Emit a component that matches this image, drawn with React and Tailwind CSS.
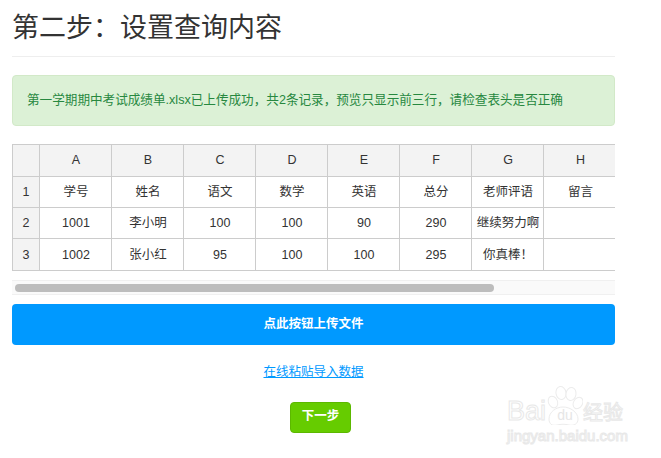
const font = { fontFamily: '"Liberation Sans", "Noto Sans CJK SC", sans-serif' }

const columns = ['A', 'B', 'C', 'D', 'E', 'F', 'G', 'H']
const rows = [
  ['学号', '姓名', '语文', '数学', '英语', '总分', '老师评语', '留言'],
  ['1001', '李小明', '100', '100', '90', '290', '继续努力啊', ''],
  ['1002', '张小红', '95', '100', '100', '295', '你真棒\uFF01', ''],
]

const title = '第二步\uFF1A设置查询内容'
const notice = '第一学期期中考试成绩单.xlsx已上传成功\uFF0C共2条记录\uFF0C预览只显示前三行\uFF0C请检查表头是否正确'

function Watermark() {
  return (
    <div className="absolute right-[34px] bottom-[14px] w-[120px] flex flex-col select-none whitespace-nowrap">
      <div className="flex items-end h-[39px]">
        <span className="w-[40px] text-[27px] leading-[27px] text-white [-webkit-text-stroke:1px_#e8e8e8]">Bai</span>
        <div className="relative w-[36px] h-[39px] shrink-0 flex items-end justify-center pb-[2px]">
          <svg className="absolute inset-0" width="36" height="39" viewBox="40 0 36 39" fill="#fff" stroke="#ececec" strokeWidth="1">
            <ellipse cx="46" cy="16" rx="4.5" ry="6" transform="rotate(-25 46 16)" />
            <ellipse cx="54" cy="7" rx="5" ry="6.5" transform="rotate(-10 54 7)" />
            <ellipse cx="64" cy="8" rx="5" ry="6.5" transform="rotate(10 64 8)" />
            <ellipse cx="71" cy="17" rx="4.5" ry="6" transform="rotate(30 71 17)" />
            <path d="M42 33c0-7 7-12 14-12s15 5 15 12c0 5-4 7-9 6-4-1-8-1-12 0-5 1-8-1-8-6z" />
          </svg>
          <span className="relative text-[14px] leading-[16px] text-[#e6e6e6]">du</span>
        </div>
        <span className="text-[20px] leading-[24px] text-white [-webkit-text-stroke:1px_#e8e8e8]">经验</span>
      </div>
      <span className="mt-[3px] text-[15px] leading-[16px] text-white [-webkit-text-stroke:1px_#e8e8e8]">jingyan.baidu.com</span>
    </div>
  )
}

function App() {
  return (
    <div style={font} className="relative w-[661px] h-[458px] overflow-hidden bg-white px-3 text-[#333]">
      <div className="w-[603px]">
        <h1 className="pt-[12px] pb-[12px] border-b border-[#eee] text-[27px] leading-[32px] font-normal text-[#333]">{title}</h1>

        <div className="mt-[18px] h-[51px] flex items-center px-[14px] rounded bg-[#dcf1d6] border border-[#d2e9c8] text-[12.6px] text-[#27883f] whitespace-nowrap">
          {notice}
        </div>

        <div className="mt-[18px] overflow-hidden border-t border-b border-l border-[#ccc] text-[12.5px] text-[#333]">
          <div className="flex h-[32px] bg-[#f3f3f3] border-b border-[#ccc]">
            <div className="w-[27px] shrink-0 border-r border-[#ccc]"></div>
            {columns.map((c) => (
              <div key={c} className="w-[72px] shrink-0 flex items-center justify-center pl-px border-r border-[#ccc] last:border-r-0">{c}</div>
            ))}
          </div>
          {rows.map((row, i) => (
            <div key={i} className="flex h-[31px] border-b border-[#ccc] last:border-b-0">
              <div className={`w-[27px] shrink-0 flex items-center justify-center bg-[#f3f3f3] border-r border-[#ccc] ${i === 2 ? 'pt-px' : ''}`}>{i + 1}</div>
              {row.map((cell, j) => (
                <div key={j} className={`w-[72px] shrink-0 flex items-center justify-center pl-px border-r border-[#ccc] last:border-r-0 whitespace-nowrap ${i === 2 ? 'pt-px' : ''}`}>{cell}</div>
              ))}
            </div>
          ))}
        </div>

        <div className="mt-[9px] h-[15px] flex items-center px-[3px] bg-[#fafafa] border-t border-b border-[#f0f0f0]">
          <div className="w-[479px] h-[8px] rounded-full bg-[#bdbdbd]"></div>
        </div>

        <button className="mt-[9px] w-full h-[41px] rounded bg-[#0099ff] text-white text-[12.5px] font-bold">点此按钮上传文件</button>

        <div className="mt-[19px] text-center text-[12.5px] leading-[16px]">
          <a className="text-[#0099ff] underline">在线粘贴导入数据</a>
        </div>

        <div className="mt-[22px] pl-[278px]">
          <button className="w-[61px] h-[31px] rounded bg-[#66cc00] border border-[#5cb800] text-white text-[12.5px] font-bold pb-[3px]">下一步</button>
        </div>
      </div>
      <Watermark />
    </div>
  )
}

export default App
